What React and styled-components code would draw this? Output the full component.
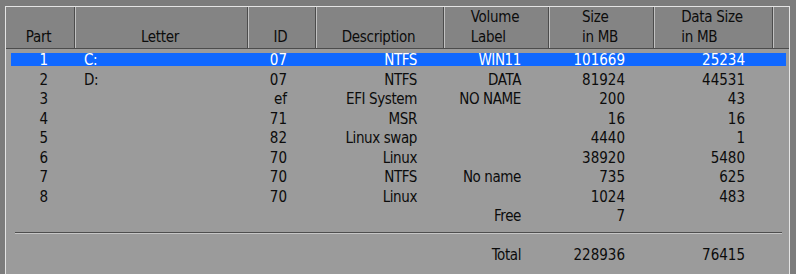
import styled, { createGlobalStyle } from "styled-components";

const GlobalStyle = createGlobalStyle`
  html, body {
    margin: 0;
    height: 100%;
    overflow: hidden;
    background: #7c7c7c;
  }
  #root {
    height: 100%;
  }
`;

const HEAD_COLS = "70px 173px 68px 128px 105px 105px 119px 15px";
const ROW_COLS = "65px 173px 68px 128px 105px 105px 119px 12px";

const Screen = styled.div`
  height: 100%;
  box-sizing: border-box;
  padding: 6px 6px 0 5px;
  font-family: "Liberation Sans Narrow", "DejaVu Sans Condensed", "Liberation Sans", sans-serif;
  font-size: 15px;
  color: #0c0c0c;
`;

const Panel = styled.div`
  height: 100%;
  box-sizing: border-box;
  background: #9b9b9b;
  border: 1px solid #e4e4e4;
  border-bottom: none;
`;

const Header = styled.div`
  display: grid;
  grid-template-columns: ${HEAD_COLS};
  height: 42px;
  box-sizing: border-box;
  background: #848484;
  border-bottom: 1px solid #4c4c4c;
`;

const HeadCell = styled.div`
  display: flex;
  align-items: flex-end;
  justify-content: center;
  padding: 0 4px 1px 0;
  line-height: 19.5px;
  letter-spacing: -0.3px;
  text-align: left;
  box-sizing: border-box;
  border-right: ${(p) => (p.$last ? "none" : "1px solid #c2c2c2")};
  box-shadow: ${(p) => (p.$last ? "none" : "inset -1px 0 0 #4c4c4c")};
`;

const Body = styled.div`
  padding-top: 1.5px;
`;

const Row = styled.div`
  padding: 2.5px 3px 4px 5px;
`;

const RowInner = styled.div`
  display: grid;
  grid-template-columns: ${ROW_COLS};
  height: 13px;
  background: ${(p) => (p.$selected ? "#1068ff" : "transparent")};
  color: ${(p) => (p.$selected ? "#ffffff" : "inherit")};
`;

const Cell = styled.div`
  line-height: 13px;
  padding-top: 1px;
  white-space: nowrap;
  text-align: ${(p) => p.$align || "right"};
  padding-left: ${(p) => (p.$align === "left" ? "8px" : "0")};
  padding-right: ${(p) => (p.$align === "left" ? 0 : p.$pad)}px;
  letter-spacing: ${(p) => (p.$num ? "0" : "-0.4px")};
`;

const Divider = styled.div`
  margin: 6px 7px 0 9px;
  border-top: 1px solid #4e4e4e;
  border-bottom: 1px solid #c6c6c6;
`;

const TotalGap = styled.div`
  height: 11px;
`;

const headers = [
  ["Part"],
  ["Letter"],
  ["ID"],
  ["Description"],
  ["Volume", "Label"],
  ["Size", "in MB"],
  ["Data Size", "in MB"],
];

const partitions = [
  ["1", "C:", "07", "NTFS", "WIN11", "101669", "25234"],
  ["2", "D:", "07", "NTFS", "DATA", "81924", "44531"],
  ["3", "", "ef", "EFI System", "NO NAME", "200", "43"],
  ["4", "", "71", "MSR", "", "16", "16"],
  ["5", "", "82", "Linux swap", "", "4440", "1"],
  ["6", "", "70", "Linux", "", "38920", "5480"],
  ["7", "", "70", "NTFS", "No name", "735", "625"],
  ["8", "", "70", "Linux", "", "1024", "483"],
];

const columns = [
  { pad: 28, num: true },
  { align: "left" },
  { pad: 30, num: true },
  { pad: 28 },
  { pad: 29 },
  { pad: 30, num: true },
  { pad: 29, num: true },
];

const DataRow = ({ values, selected }) => (
  <Row>
    <RowInner $selected={selected}>
      {columns.map((c, i) => (
        <Cell key={i} $align={c.align} $pad={c.pad} $num={c.num}>
          {values[i]}
        </Cell>
      ))}
      <div />
    </RowInner>
  </Row>
);

export default function App() {
  return (
    <>
      <GlobalStyle />
      <Screen>
        <Panel>
          <Header>
            {headers.map((lines, i) => (
              <HeadCell key={i}>
                <div>
                  {lines.map((l) => (
                    <div key={l}>{l}</div>
                  ))}
                </div>
              </HeadCell>
            ))}
            <HeadCell $last />
          </Header>
          <Body>
            {partitions.map((p, i) => (
              <DataRow key={p[0]} values={p} selected={i === 0} />
            ))}
            <DataRow values={["", "", "", "", "Free", "7", ""]} />
            <Divider />
            <TotalGap />
            <DataRow values={["", "", "", "", "Total", "228936", "76415"]} />
          </Body>
        </Panel>
      </Screen>
    </>
  );
}
